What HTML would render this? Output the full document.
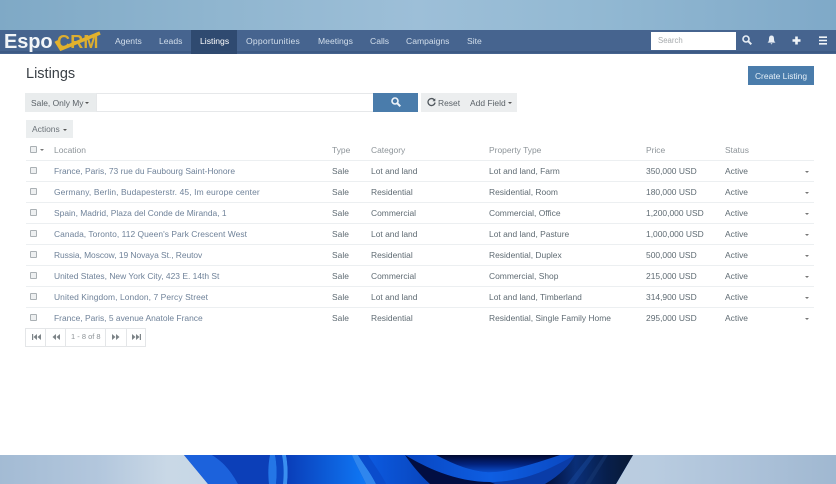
<!DOCTYPE html>
<html><head><meta charset="utf-8"><title>Listings</title>
<style>
html,body{margin:0;padding:0;width:836px;height:484px;overflow:hidden;background:#fff;font-family:"Liberation Sans",sans-serif;}
#w{position:absolute;left:0;top:0;width:836px;height:484px;overflow:hidden;filter:blur(.35px)}
.a{position:absolute;white-space:nowrap;line-height:12px;}
.n{color:#d3dfec;font-size:8.6px;top:35px}
.t{font-size:8.45px;color:#5f6b73}
.l{font-size:8.45px;color:#6f8299}
.h{font-size:8.45px;color:#8d9499;top:144px}
.line{position:absolute;left:26px;width:788px;height:1px;background:#eceff1}
.cb{position:absolute;left:30px;width:5px;height:5px;border:1px solid #aab0b4;background:#eef0f1;border-radius:1px}
.car{position:absolute;width:0;height:0;border-left:2px solid transparent;border-right:2px solid transparent;border-top:2px solid #555}
svg{position:absolute;overflow:visible}
</style></head><body><div id="w">
<div class="a" style="left:0;top:0;width:836px;height:30px;background:linear-gradient(90deg,#7fa9c6 0%,#8fb5cf 25%,#9dbfd8 50%,#93b9d3 70%,#7fa9c8 100%)"></div>
<div class="a" style="left:0;top:30px;width:836px;height:24px;background:#46648f"></div>
<div class="a" style="left:0;top:51px;width:836px;height:2px;background:#3d5a84"></div>
<div class="a" style="left:191px;top:30px;width:46px;height:24px;background:#2f4a70"></div>

<div class="a" style="left:4px;top:32px;font-size:20px;line-height:20px;font-weight:bold;color:#f2f5f8;letter-spacing:-.1px">Espo</div>
<div class="a" style="left:57px;top:32px;font-size:18px;line-height:20px;font-weight:bold;color:#dcae30;letter-spacing:.2px">CRM</div>
<svg style="left:54px;top:32px" width="48" height="20"><path d="M2 9L7 17L46 1" fill="none" stroke="#e3b22c" stroke-width="3.500"/></svg>

<div class="a n" style="left:115px">Agents</div>
<div class="a n" style="left:159px">Leads</div>
<div class="a n" style="left:200px;color:#fff">Listings</div>
<div class="a n" style="left:246px;letter-spacing:.22px">Opportunities</div>
<div class="a n" style="left:318px">Meetings</div>
<div class="a n" style="left:370px">Calls</div>
<div class="a n" style="left:406px">Campaigns</div>
<div class="a n" style="left:467px">Site</div>

<div class="a" style="left:651px;top:32px;width:85px;height:18px;background:#fff"></div>
<div class="a" style="left:658px;top:35px;font-size:7.800px;color:#a5a9ac">Search</div>
<svg style="left:742px;top:35px" width="10" height="10" viewBox="0 0 10 10"><circle cx="4" cy="4" r="3" fill="none" stroke="#e8eef5" stroke-width="1.600"/><path d="M6.200 6.200L9.300 9.300" stroke="#e8eef5" stroke-width="2"/></svg>
<svg style="left:767px;top:35px" width="9" height="10" viewBox="0 0 9 10"><path d="M4.500 .5C2.500 .5 2 2 2 4C2 6 1.500 6.800 .5 7.600H8.500C7.500 6.800 7 6 7 4C7 2 6.500 .5 4.500 .5ZM3.500 8.300H5.500L4.500 9.500Z" fill="#e8eef5"/></svg>
<svg style="left:792px;top:36px" width="9" height="9" viewBox="0 0 9 9"><path d="M4.500 .5V8.500M.5 4.500H8.500" stroke="#f0f4f8" stroke-width="2.600"/></svg>
<svg style="left:819px;top:36px" width="8" height="9" viewBox="0 0 8 9"><path d="M0 1.200H8M0 4.500H8M0 7.800H8" stroke="#f0f4f8" stroke-width="1.600"/></svg>

<div class="a" style="left:26px;top:65px;font-size:14.500px;line-height:18px;color:#3a4046">Listings</div>
<div class="a" style="left:748px;top:66px;width:66px;height:19px;background:#4a7cab;color:#e6f0f8;font-size:8.450px;line-height:20px;text-align:center">Create Listing</div>

<div class="a" style="left:25px;top:93px;width:71px;height:19px;background:#e9eced"></div>
<div class="a" style="left:31px;top:97px;font-size:8.450px;color:#5b6268">Sale, Only My</div>
<div class="car" style="left:85px;top:102px"></div>
<div class="a" style="left:96px;top:93px;width:276px;height:17px;border:1px solid #e6e8ea;background:#fff"></div>
<div class="a" style="left:373px;top:93px;width:45px;height:19px;background:#4a7cab"></div>
<svg style="left:391px;top:97px" width="10" height="10" viewBox="0 0 10 10"><circle cx="4" cy="4" r="3" fill="none" stroke="#f0f5fa" stroke-width="1.600"/><path d="M6.200 6.200L9.300 9.300" stroke="#f0f5fa" stroke-width="2"/></svg>
<div class="a" style="left:421px;top:93px;width:96px;height:19px;background:#eceeef"></div>
<svg style="left:427px;top:98px" width="9" height="9" viewBox="0 0 9 9"><path d="M7.500 2.200A3.500 3.500 0 1 0 8 4.500" fill="none" stroke="#4f565c" stroke-width="1.300"/><path d="M8.300 .4V3.200H5.500Z" fill="#4f565c"/></svg>
<div class="a" style="left:438px;top:97px;font-size:8.450px;color:#5b6268">Reset</div>
<div class="a" style="left:470px;top:97px;font-size:8.450px;color:#5b6268">Add Field</div>
<div class="car" style="left:508px;top:102px"></div>

<div class="a" style="left:26px;top:120px;width:47px;height:18px;background:#ebeeef"></div>
<div class="a" style="left:32px;top:123px;font-size:8.450px;color:#6b7278">Actions</div>
<div class="car" style="left:63px;top:129px"></div>

<div class="cb" style="top:146px"></div><div class="car" style="left:40px;top:149px;border-top-color:#777"></div>
<div class="a h" style="left:54px">Location</div>
<div class="a h" style="left:332px">Type</div>
<div class="a h" style="left:371px">Category</div>
<div class="a h" style="left:489px">Property Type</div>
<div class="a h" style="left:646px">Price</div>
<div class="a h" style="left:725px">Status</div>

<div class="line" style="top:160px"></div><div class="line" style="top:181px"></div><div class="line" style="top:202px"></div><div class="line" style="top:223px"></div><div class="line" style="top:244px"></div><div class="line" style="top:265px"></div><div class="line" style="top:286px"></div><div class="line" style="top:307px"></div>

<div class="cb" style="top:167px"></div>
<div class="a l" style="left:54px;top:165px">France, Paris, 73 rue du Faubourg Saint-Honore</div>
<div class="a t" style="left:332px;top:165px">Sale</div><div class="a t" style="left:371px;top:165px">Lot and land</div><div class="a t" style="left:489px;top:165px">Lot and land, Farm</div><div class="a t" style="left:646px;top:165px">350,000 USD</div><div class="a t" style="left:725px;top:165px">Active</div><div class="car" style="left:805px;top:171px;border-top-color:#777"></div>

<div class="cb" style="top:188px"></div>
<div class="a l" style="left:54px;top:186px;letter-spacing:.12px">Germany, Berlin, Budapesterstr. 45, Im europe center</div>
<div class="a t" style="left:332px;top:186px">Sale</div><div class="a t" style="left:371px;top:186px">Residential</div><div class="a t" style="left:489px;top:186px">Residential, Room</div><div class="a t" style="left:646px;top:186px">180,000 USD</div><div class="a t" style="left:725px;top:186px">Active</div><div class="car" style="left:805px;top:192px;border-top-color:#777"></div>

<div class="cb" style="top:209px"></div>
<div class="a l" style="left:54px;top:207px">Spain, Madrid, Plaza del Conde de Miranda, 1</div>
<div class="a t" style="left:332px;top:207px">Sale</div><div class="a t" style="left:371px;top:207px">Commercial</div><div class="a t" style="left:489px;top:207px">Commercial, Office</div><div class="a t" style="left:646px;top:207px">1,200,000 USD</div><div class="a t" style="left:725px;top:207px">Active</div><div class="car" style="left:805px;top:213px;border-top-color:#777"></div>

<div class="cb" style="top:230px"></div>
<div class="a l" style="left:54px;top:228px;letter-spacing:.04px">Canada, Toronto, 112 Queen's Park Crescent West</div>
<div class="a t" style="left:332px;top:228px">Sale</div><div class="a t" style="left:371px;top:228px">Lot and land</div><div class="a t" style="left:489px;top:228px">Lot and land, Pasture</div><div class="a t" style="left:646px;top:228px">1,000,000 USD</div><div class="a t" style="left:725px;top:228px">Active</div><div class="car" style="left:805px;top:234px;border-top-color:#777"></div>

<div class="cb" style="top:251px"></div>
<div class="a l" style="left:54px;top:249px;letter-spacing:-.05px">Russia, Moscow, 19 Novaya St., Reutov</div>
<div class="a t" style="left:332px;top:249px">Sale</div><div class="a t" style="left:371px;top:249px">Residential</div><div class="a t" style="left:489px;top:249px">Residential, Duplex</div><div class="a t" style="left:646px;top:249px">500,000 USD</div><div class="a t" style="left:725px;top:249px">Active</div><div class="car" style="left:805px;top:255px;border-top-color:#777"></div>

<div class="cb" style="top:272px"></div>
<div class="a l" style="left:54px;top:270px">United States, New York City, 423 E. 14th St</div>
<div class="a t" style="left:332px;top:270px">Sale</div><div class="a t" style="left:371px;top:270px">Commercial</div><div class="a t" style="left:489px;top:270px">Commercial, Shop</div><div class="a t" style="left:646px;top:270px">215,000 USD</div><div class="a t" style="left:725px;top:270px">Active</div><div class="car" style="left:805px;top:276px;border-top-color:#777"></div>

<div class="cb" style="top:293px"></div>
<div class="a l" style="left:54px;top:291px;letter-spacing:.08px">United Kingdom, London, 7 Percy Street</div>
<div class="a t" style="left:332px;top:291px">Sale</div><div class="a t" style="left:371px;top:291px">Lot and land</div><div class="a t" style="left:489px;top:291px">Lot and land, Timberland</div><div class="a t" style="left:646px;top:291px">314,900 USD</div><div class="a t" style="left:725px;top:291px">Active</div><div class="car" style="left:805px;top:297px;border-top-color:#777"></div>

<div class="cb" style="top:314px"></div>
<div class="a l" style="left:54px;top:312px">France, Paris, 5 avenue Anatole France</div>
<div class="a t" style="left:332px;top:312px">Sale</div><div class="a t" style="left:371px;top:312px">Residential</div><div class="a t" style="left:489px;top:312px">Residential, Single Family Home</div><div class="a t" style="left:646px;top:312px">295,000 USD</div><div class="a t" style="left:725px;top:312px">Active</div><div class="car" style="left:805px;top:318px;border-top-color:#777"></div>

<div class="a" style="left:25px;top:328px;width:119px;height:17px;border:1px solid #e4e6e8;background:#fff"></div>
<div class="a" style="left:45px;top:328px;width:1px;height:18px;background:#e4e6e8"></div>
<div class="a" style="left:65px;top:328px;width:1px;height:18px;background:#e4e6e8"></div>
<div class="a" style="left:105px;top:328px;width:1px;height:18px;background:#e4e6e8"></div>
<div class="a" style="left:126px;top:328px;width:1px;height:18px;background:#e4e6e8"></div>
<svg style="left:32px;top:334px" width="9" height="6" viewBox="0 0 9 6" fill="#7d8488"><path d="M0 0H1.200V6H0ZM5 0V6L1.500 3ZM9 0V6L5.500 3Z"/></svg>
<svg style="left:52px;top:334px" width="8" height="6" viewBox="0 0 8 6" fill="#7d8488"><path d="M4 0V6L.5 3ZM8 0V6L4.500 3Z"/></svg>
<div class="a" style="left:71px;top:331px;font-size:7.500px;color:#8c9296">1 - 8 of 8</div>
<svg style="left:112px;top:334px" width="8" height="6" viewBox="0 0 8 6" fill="#7d8488"><path d="M0 0V6L3.500 3ZM4 0V6L7.500 3Z"/></svg>
<svg style="left:132px;top:334px" width="9" height="6" viewBox="0 0 9 6" fill="#7d8488"><path d="M0 0V6L3.500 3ZM4 0V6L7.500 3ZM7.800 0H9V6H7.800Z"/></svg>

<div class="a" style="left:0;top:455px;width:836px;height:29px;background:linear-gradient(90deg,#a3bbd4 0%,#b3c7dd 12%,#c9d8e6 20%,#b9cce0 78%,#aec3da 88%,#a0b8d1 100%)"></div>
<svg style="left:0;top:455px" width="836" height="29" viewBox="0 0 836 29">
<defs>
<linearGradient id="g2" x1="0" x2="1" y1="0" y2="0"><stop offset="0" stop-color="#0a3db8"/><stop offset="1" stop-color="#0f78f5"/></linearGradient>
<linearGradient id="g3" x1="0" x2="1" y1="0" y2="0"><stop offset="0" stop-color="#0c5ae0"/><stop offset="1" stop-color="#0845bc"/></linearGradient>
<linearGradient id="g4" x1="0" x2="0" y1="0" y2="1"><stop offset="0" stop-color="#010a30"/><stop offset=".55" stop-color="#03237e"/><stop offset="1" stop-color="#0a4cc8"/></linearGradient>
<linearGradient id="g5" x1="0" x2="1" y1="0" y2="0"><stop offset="0" stop-color="#020f3a"/><stop offset=".35" stop-color="#0a2f78"/><stop offset=".7" stop-color="#071f4c"/><stop offset="1" stop-color="#0a1a34"/></linearGradient>
<linearGradient id="g6" x1="0" x2="1" y1="0" y2="0"><stop offset="0" stop-color="#0845c0"/><stop offset=".5" stop-color="#0e5ee2"/><stop offset="1" stop-color="#0a48c0"/></linearGradient>
</defs>
<path d="M184 0H633L616 29H208Z" fill="#0a47c4"/>
<path d="M184 0H212C225 8 232 18 238 29H208Z" fill="#1c62dc"/>
<path d="M212 0H270C268 10 268 20 269 29H238C232 18 225 8 212 0Z" fill="#0c3fb8"/>
<path d="M270 0H275C277 10 277 20 276 29H269C268 20 268 10 270 0Z" fill="#2476e6"/>
<path d="M275 0H282C284 10 284 20 283 29H276C277 20 277 10 275 0Z" fill="#0c49c4"/>
<path d="M282 0H286C288 10 288 20 287 29H283C284 20 284 10 282 0Z" fill="#3a8ff0"/>
<path d="M286 0H352C356 10 362 20 366 29H287C288 20 288 10 286 0Z" fill="url(#g2)"/>
<path d="M352 0H358C364 10 372 20 376 29H366C362 20 356 10 352 0Z" fill="#2f86ee"/>
<path d="M358 0H368C374 10 382 20 386 29H376C372 20 364 10 358 0Z" fill="#0a4ccc"/>
<path d="M368 0H405C412 10 420 20 430 29H386C382 20 374 10 368 0Z" fill="url(#g3)"/>
<path d="M405 0H436C452 8 466 15 486 17C505 18 530 10 560 0H575C550 14 525 27 490 27C455 27 425 12 405 0Z" fill="url(#g6)"/>
<path d="M405 0C412 10 420 20 430 29H500L490 27C455 27 425 12 405 0Z" fill="#020e42"/>
<path d="M436 0H560C530 10 505 18 486 17C466 15 452 8 436 0Z" fill="url(#g4)"/>
<path d="M490 27C525 27 550 14 575 0H580C570 12 556 24 545 29H495Z" fill="#0a3ca8"/>
<path d="M575 0H633L616 29H545C560 20 570 10 575 0Z" fill="url(#g5)"/>
<path d="M590 0H595L574 29H567Z" fill="#1a4ba0" opacity=".45"/>
<path d="M604 0H608L590 29H585Z" fill="#173a74" opacity=".5"/>
</svg>
</div></body></html>
